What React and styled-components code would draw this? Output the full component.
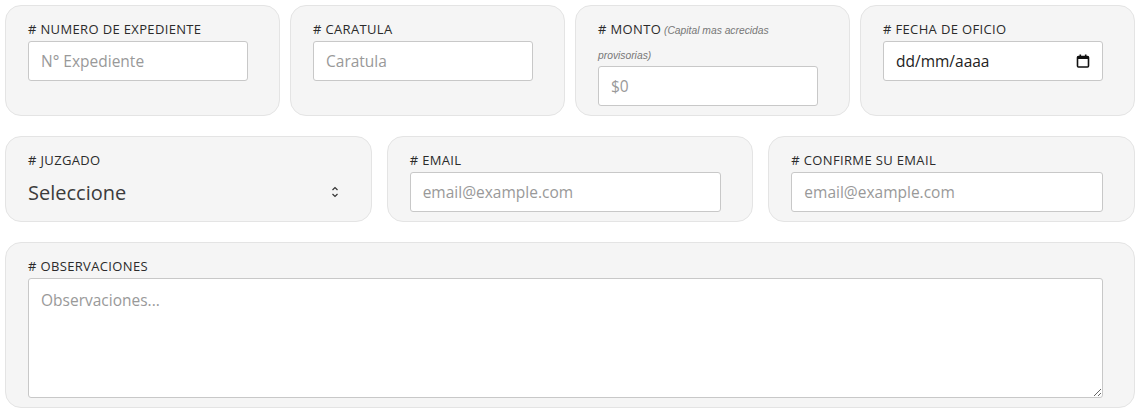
import styled, { createGlobalStyle } from 'styled-components';

const GlobalStyle = createGlobalStyle`
 body {
  margin: 0;
  background: #fff;
  font-family: 'Open Sans', 'DejaVu Sans', sans-serif;
 }
 * {
  box-sizing: border-box;
 }
`;

const Page = styled.div`
 padding: 5px 10px 5px 5px;
 display: flex;
 flex-direction: column;
 gap: 20px;
`;

const Row = styled.div`
 display: grid;
 grid-template-columns: repeat(${(p) => p.cols}, 1fr);
 column-gap: ${(p) => p.gap}px;
`;

const Card = styled.div`
 background-color: #f5f5f5;
 border: 1px solid #e4e4e4;
 border-radius: 16px;
 padding: 11px 31px 9px 22px;
`;

const Label = styled.label`
 display: block;
 max-width: ${(p) => (p.narrow ? '180px' : 'none')};
 font-size: 13px;
 font-weight: 500;
 letter-spacing: 0.35px;
 color: #2b2b2b;
 line-height: ${(p) => (p.narrow ? '24.5px' : '24px')};
 text-transform: uppercase;
`;

const Hint = styled.span`
 font-family: 'Liberation Sans', Arial, sans-serif;
 font-style: italic;
 font-size: 10.3px;
 font-weight: 400;
 line-height: 1;
 letter-spacing: 0;
 color: #777;
 text-transform: none;
`;

const Input = styled.input`
 display: block;
 width: 100%;
 height: 40px;
 padding: 0 12px;
 border: 1px solid #c8c8c8;
 border-radius: 3px;
 background: #fff;
 font-family: inherit;
 font-size: 15.5px;
 color: #333;
 outline: none;

 &::placeholder {
  color: #999;
  font-weight: 500;
 }
`;

const DateBox = styled.div`
 display: flex;
 align-items: center;
 justify-content: space-between;
 height: 40px;
 padding: 0 12px;
 border: 1px solid #c8c8c8;
 border-radius: 3px;
 background: #fff;
 font-size: 15.5px;
 font-weight: 500;
 color: #222;
`;

const SelectWrap = styled.div`
 position: relative;
 height: 40px;
 margin-right: -8px;
`;

const Select = styled.select`
 appearance: none;
 width: 100%;
 height: 40px;
 padding: 0;
 border: none;
 background: transparent;
 font-family: inherit;
 font-size: 20px;
 font-weight: 500;
 color: #3c3c3c;
 outline: none;
`;

const Arrows = styled.svg`
 position: absolute;
 right: 9px;
 top: 14px;
 pointer-events: none;
`;

const TextArea = styled.textarea`
 display: block;
 width: 100%;
 height: 120px;
 padding: 10px 12px;
 border: 1px solid #c8c8c8;
 border-radius: 3px;
 background: #fff;
 font-family: inherit;
 font-size: 15.5px;
 color: #333;
 outline: none;

 &::placeholder {
  color: #999;
  font-weight: 500;
 }
`;

const CalendarIcon = () => (
 <svg width='14' height='14' viewBox='0 0 14 14'>
  <rect x='1.5' y='2.5' width='11' height='10.5' rx='1' fill='none' stroke='#111' strokeWidth='1.6' />
  <rect x='1.5' y='2.5' width='11' height='2.5' fill='#111' />
  <rect x='3.5' y='0.5' width='1.6' height='3' fill='#111' />
  <rect x='8.9' y='0.5' width='1.6' height='3' fill='#111' />
 </svg>
);

const Field = ({ label, hint, children }) => (
 <Card>
  <Label narrow={hint ? 1 : 0}>
   # {label}
   {hint && <Hint> {hint}</Hint>}
  </Label>
  {children}
 </Card>
);

const App = () => {
 return (
  <>
   <GlobalStyle />
   <Page>
    <Row cols={4} gap={10}>
     <Field label='Numero de expediente'>
      <Input placeholder='N° Expediente' />
     </Field>
     <Field label='Caratula'>
      <Input placeholder='Caratula' />
     </Field>
     <Field label='Monto' hint='(Capital mas acrecidas provisorias)'>
      <Input placeholder='$0' />
     </Field>
     <Field label='Fecha de oficio'>
      <DateBox>
       <span>dd/mm/aaaa</span>
       <CalendarIcon />
      </DateBox>
     </Field>
    </Row>
    <Row cols={3} gap={15}>
     <Field label='Juzgado'>
      <SelectWrap>
       <Select defaultValue=''>
        <option value=''>Seleccione</option>
       </Select>
       <Arrows width='8' height='12' viewBox='0 0 8 12'>
        <path d='M1.5 4 L4 1.5 L6.5 4 M1.5 8 L4 10.5 L6.5 8' fill='none' stroke='#333' strokeWidth='1.2' />
       </Arrows>
      </SelectWrap>
     </Field>
     <Field label='Email'>
      <Input placeholder='email@example.com' />
     </Field>
     <Field label='Confirme su email'>
      <Input placeholder='email@example.com' />
     </Field>
    </Row>
    <Row cols={1} gap={0}>
     <Field label='Observaciones'>
      <TextArea placeholder='Observaciones...' />
     </Field>
    </Row>
   </Page>
  </>
 );
};

export default App;
